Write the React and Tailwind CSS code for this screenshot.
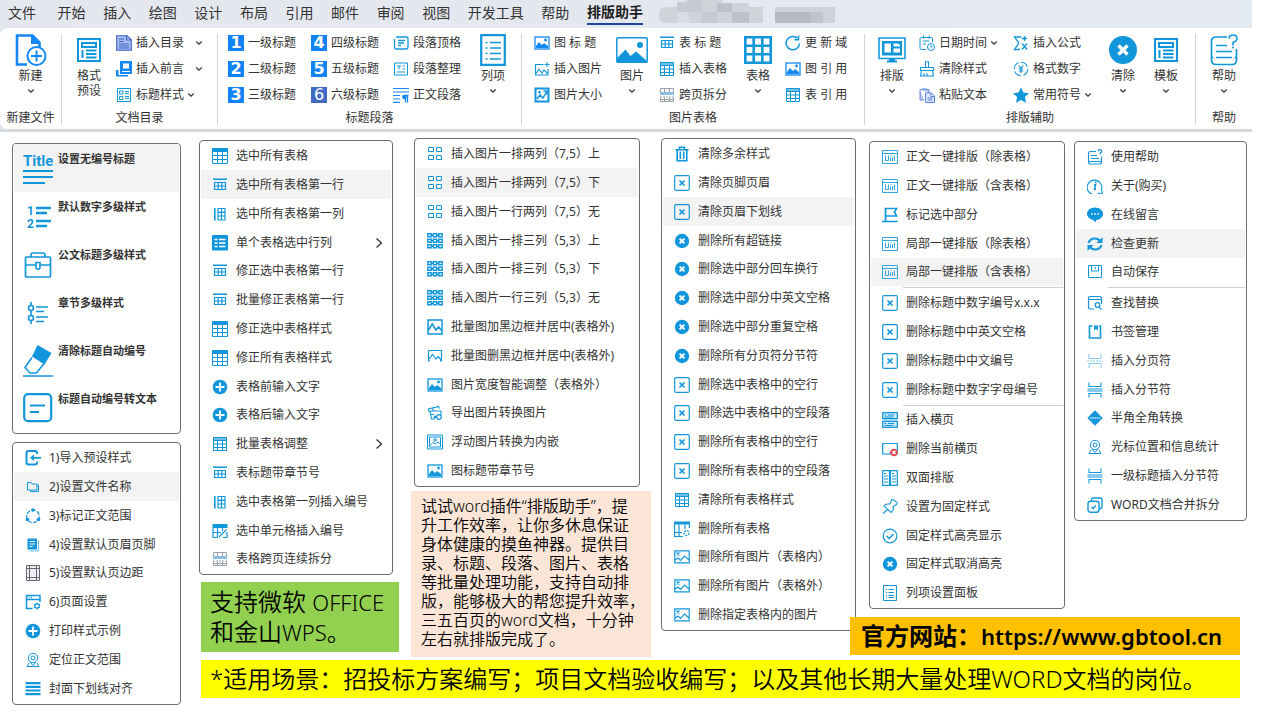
import React from 'react';

const B = '#1296db';
const V = '#1488f5';

function Pic({ x = 1, y = 2, w = 14, h = 12 }) {
  return (
    <>
      <rect x={x} y={y} width={w} height={h} fill="none" stroke="currentColor" strokeWidth="1.3" />
      <path d="M2 13V11l3-4 3 3 2-2 4 3v2z" fill="currentColor" />
      <circle cx="11.5" cy="5" r="1.4" fill="currentColor" />
    </>
  );
}

function Cross({ x = 8, y = 8, r = 2.5, w = 1.7, c = 'currentColor' }) {
  return (
    <path
      d={`M${x - r} ${y - r}L${x + r} ${y + r}M${x + r} ${y - r}L${x - r} ${y + r}`}
      stroke={c}
      strokeWidth={w}
      fill="none"
    />
  );
}

const line = { fill: 'none', stroke: 'currentColor', strokeWidth: 1.2 };
const solid = { fill: 'currentColor' };

const ICONS = {
  table: (
    <>
      <path {...solid} d="M0 0h16v4H0z" />
      <path {...line} strokeWidth="1" d="M.5 4v11.5h15V4M5.5 4v11.5M10.5 4v11.5M.5 7.5h15M.5 11.5h15" />
    </>
  ),
  tableThin: (
    <>
      <path {...solid} opacity=".6" d="M1 1h14v3.5H1z" />
      <path {...line} strokeWidth="1" d="M1.5 1.5h13v13h-13zM1.5 4.5h13M5.5 4.5v10M10.5 4.5v10M1.5 8h13M1.5 11.5h13" />
    </>
  ),
  rowTable: (
    <>
      <path {...solid} d="M1 1.500h14v1.500H1z" />
      <path {...line} d="M2.5 5.5h11v7h-11zM2.5 9h11M6.2 5.5v7M9.8 5.5v7" />
    </>
  ),
  colTable: (
    <>
      <path {...solid} d="M2 2h1.600v12.500H2z" />
      <path {...line} d="M6 2.500h7v11.500H6zM9.500 2.500V14M6 6.300h7M6 10h7" />
    </>
  ),
  listTable: (
    <>
      <rect {...solid} width="16" height="15.500" rx="1" />
      <path stroke="#fff" strokeWidth="1.500" d="M2.500 4.500h3M7 4.500h6.500M2.500 8h3M7 8h6.500M2.500 11.500h3M7 11.500h6.500" />
    </>
  ),
  editTable: (
    <>
      <path {...solid} d="M.5 1h15v4H.5z" />
      <path {...line} d="M1 5v9.500h5M15 9v5.500h-4M5.500 5v9M1 9.500h8M10.500 5v3M7 14l7.500-7.500" />
    </>
  ),
  splitTable: (
    <>
      <path fill="none" stroke="#9aa0a8" d="M1.500 5.500v-4h13v4M1.500 10.500v4h13v-4M5.500 1.500v4M10.500 1.500v4M5.500 10.500v4M10.500 10.500v4M1.500 12.500h13" />
      <path fill="#8dbfe2" d="M1 5h14v3H1z" />
      <path stroke="#9aa0a8" strokeDasharray="2 1" d="M1 10h14" />
    </>
  ),
  plus: (
    <>
      <circle {...solid} cx="8" cy="8" r="7.300" />
      <path stroke="#fff" strokeWidth="1.800" d="M8 3.500v9M3.500 8h9" />
    </>
  ),
  grid4: <path {...line} strokeWidth="1" d="M1.500 1.500h5v4h-5zM9.500 1.500h5v4h-5zM1.500 9.500h5v4h-5zM9.500 9.500h5v4h-5z" />,
  grid9: (
    <path
      {...line}
      strokeWidth="1.400"
      d="M.8 .8h3.400v3H.8zM6.300 .8h3.400v3H6.300zM11.800 .8h3.400v3h-3.400zM.8 6.300h3.400v3H.8zM6.300 6.300h3.400v3H6.300zM11.800 6.300h3.400v3h-3.400zM.8 11.800h3.400v3H.8zM6.300 11.800h3.400v3H6.300zM11.800 11.800h3.400v3h-3.400zM4.200 2.300h2.100M9.700 2.300h2.100M4.200 7.800h2.100M9.700 7.800h2.100M4.200 13.300h2.100M9.700 13.300h2.100"
    />
  ),
  frame: <path {...line} strokeWidth="1.500" d="M1 1h14v14H1zM1.500 11l3.800-6 3.700 6 2.500-3 3.300 3.500" />,
  frameOpen: <path {...line} strokeWidth="1.200" d="M1.500 2.500h13V13H13M1.500 2.500V13H3M1.500 12l4-5.500L9 11l2-2.500 3.500 4" />,
  pic: <Pic />,
  export: (
    <>
      <path {...line} strokeWidth="1.100" d="M2 7 1.500 4l10-2.500 1 2M3 6h11v4M3 6l1.500 8H8M4 9.500h3M6 3v3" />
      <circle {...line} cx="12" cy="12" r="2.300" />
      <path {...solid} d="M6 13l2-3 2 3z" />
    </>
  ),
  embed: (
    <>
      <path {...line} strokeWidth="1" d="M.5 1h15v14H.5zM2.500 3h11v10h-11zM3 11.500l3-3 2.500 1.500L11 8l2.500 2" />
      <circle {...line} strokeWidth="1" cx="8" cy="6" r="1.300" />
    </>
  ),
  trash: (
    <path {...line} strokeWidth="1.600" d="M1.500 3.800h13M5.500 3.500V1.200h5v2.300M3.200 4v10.800h9.600V4M6.300 5.500v7.500M9.700 5.500v7.500" />
  ),
  boxX: (
    <>
      <rect {...line} x=".7" y=".7" width="14.600" height="14.600" rx="1.200" />
      <Cross />
    </>
  ),
  circleX: (
    <>
      <circle {...solid} cx="8" cy="8" r="7.200" />
      <Cross c="#fff" r={2.4} w={2} />
    </>
  ),
  delTable: (
    <>
      <path {...solid} d="M0 .5h16v3H0z" />
      <path {...line} d="M.6 3.500v12H9M5 3.500v12M15.400 3.500V7M.6 11.500H8M11 3.500V8" />
      <circle {...line} strokeDasharray="2 1" cx="12.500" cy="12" r="2.500" />
    </>
  ),
  delPic: (
    <>
      <path {...line} d="M.8 1.800h14.400v12H.8zM1 11l3-2 2.500 2.500L10.500 7l4.500 4" />
      <Cross x={4} y={5} r={1.5} w={1.2} />
    </>
  ),
  layout: (
    <path
      {...line}
      strokeWidth="1"
      opacity=".85"
      d="M.5 1.500h15v13H.5zM.5 4.500h15M3.500 6.500v5h3v-5M8.500 6.500h1M8.500 8.500v3.500M10.500 8v4M12.500 6.500V12"
    />
  ),
  flag: <path {...line} strokeWidth="1.700" d="M3.500 14V1.500h11l-2 3.700 2 3.800h-11M0 14.500h15.500" />,
  insPage: (
    <>
      <path fill="currentColor" opacity=".22" d="M1 1h14v14H1z" />
      <path {...line} d="M.7 .7h14.600v6H.7zM.7 9.300h14.600v6H.7zM2.500 3h2M6 3h6M2.500 5h9M2.500 11.500h2M6 11.500h6M2.500 13.500h9" />
    </>
  ),
  delPage: (
    <>
      <path {...line} d="M.7 2.500h14.600V13H.7z" />
      <path fill="#27508c" d="M7 12.500l3.500-4v4z" />
      <circle cx="12" cy="11.500" r="3.700" fill="#e64b55" />
      <Cross x={12} y={11.5} r={1.5} w={1.2} c="#fff" />
    </>
  ),
  pages: <path {...line} d="M.7 .7h6.800v14.600H.7zM8.500 .7h6.800v14.600H8.500zM2 3.500h2M2 6h4M2 9h4M2 12h4M10 3.500h2M10 6h4M10 9h4M10 12h4" />,
  pin: <path {...line} strokeWidth="1.100" d="M9.500 1q1-.7 2 0l3.500 2.500q.5 1-.3 1.700L11 7.500l.5 3L9 13.500 2 7q1.500-2 3.500-2H8zM5.500 10.500l-4.500 4" />,
  check: (
    <>
      <circle {...line} cx="8" cy="8" r="6.800" />
      <path {...line} strokeWidth="1.500" d="M4.700 8l2.500 2.500L11.500 6" />
    </>
  ),
  list: <path {...line} strokeWidth="1" d="M1.500 .5h13v15h-13zM4 4.500h1M6.500 4.500H12M4 7.500h1M6.500 7.500H12M4 10.500h1M6.500 10.500H12M4 12.500h1M6.500 12.500H12" />,
  help: (
    <>
      <path {...line} strokeWidth="1.100" d="M9 2.500H3.500Q1.500 2.500 1.500 4.500v8.500q0 2 2 2h9q2 0 2-2V7.500M4 6.500h6M4 9.500h8M1 12.500h14" />
      <path {...line} d="M11 2.200q.3-1.500 2-1.500t1.800 1.500q0 1.200-1.600 1.800v1.500" />
    </>
  ),
  info: (
    <>
      <path {...line} strokeWidth="1.100" d="M15.500 15.200h-3.500A7.300 7.300 0 1 1 14.500 11.500z" />
      <path {...line} strokeWidth="1.500" d="M7 6.800h1.500L7.700 11.200H9" />
      <circle {...solid} cx="8.700" cy="4.500" r="1" />
    </>
  ),
  chat: (
    <>
      <path {...solid} d="M8 .5c4.500 0 8 2.800 8 6.300 0 3.300-2.800 5.700-6.500 6.200L8 15.500 6.500 13C2.800 12.500 0 10 0 6.800 0 3.300 3.500 .5 8 .5z" />
      <path stroke="#fff" strokeWidth="1.500" d="M4 7h1.500M7.200 7h1.500M10.500 7H12" />
    </>
  ),
  sync: (
    <>
      <path {...line} strokeWidth="2.200" d="M1.500 7Q3 2.500 8 2.500q3 0 4.500 2M14.500 9Q13 13.500 8 13.500q-3 0-4.500-2" />
      <path {...solid} d="M15.500 1v6h-6zM.5 15V9h6z" />
    </>
  ),
  save: <path {...line} strokeWidth="1" d="M1.500 1.500h13v12h-13zM4.500 1.500V7h7V1.500M8.500 3v2" />,
  search: (
    <>
      <path {...line} d="M7 14H3.500q-2 0-2-2V3.500q0-2 2-2h9q2 0 2 2V9M1.500 4.500h13" />
      <circle {...line} cx="10.500" cy="10" r="2.300" />
      <path {...line} d="M12 12l2.500 2.500" />
    </>
  ),
  bookmark: (
    <>
      <path {...line} strokeWidth="1.600" d="M5.500 2H2.500v12h11V2H12" />
      <path {...solid} d="M7 1.500h4v5L9 5 7 6.500z" />
    </>
  ),
  breakLight: (
    <g opacity=".5">
      <path {...line} strokeWidth="1" d="M2 1v4.500h12V1M2 15v-4.500h12V15" />
      <path {...line} strokeDasharray="2 1" d="M0 8h16" />
    </g>
  ),
  breakPage: <path {...line} strokeWidth="1.100" d="M2 .5v4h12v-4M2 15.500v-4h12v4M.5 7h15M.5 9h15" />,
  diamond: (
    <>
      <path {...solid} d="M8 .3L15.700 8 8 15.700 .3 8z" />
      <path stroke="#cfeafa" strokeWidth="1.300" strokeDasharray="1.500 .7" d="M3 8h10" />
    </>
  ),
  locate: (
    <>
      <circle {...line} strokeWidth="1" cx="8" cy="6" r="4.700" />
      <circle {...line} strokeWidth="1" cx="8" cy="6" r="2" />
      <path {...line} strokeWidth="1" d="M5 10l3 3.500 3-3.500M4 11l-2 3.500h12L12 11" />
    </>
  ),
  merge: (
    <>
      <path {...line} strokeWidth="1.400" d="M4.500 4V2.500q0-1.500 1.500-1.500h7.500Q15 1 15 2.500V10q0 1.500-1.500 1.500H12" />
      <rect {...line} strokeWidth="1.400" x="1" y="4.200" width="11" height="11" rx="2.500" />
      <path {...line} strokeWidth="1.400" d="M4.500 9.700l1.700 1.700L9 8.500" />
    </>
  ),
  import: (
    <>
      <path {...line} strokeWidth="2" d="M12 4V3q0-2-2-2H3.500q-2 0-2 2v9.500q0 2 2 2H10q2 0 2-2v-1" />
      <path {...line} strokeWidth="1.800" d="M16 7.800H7" />
      <path {...solid} d="M9 4.500v6.600L5 7.800z" />
    </>
  ),
  folder: <path {...line} strokeWidth="1" d="M2.500 3.500H6l1 1.500h5v6H2.500zM12 6h1.500v6.500H5" />,
  ring: (
    <>
      <circle {...line} cx="8" cy="8.300" r="6.300" strokeDasharray="4 1.500" />
      <circle {...solid} cx="8" cy="2" r="1.800" />
      <circle {...solid} cx="2.500" cy="11.500" r="1.800" />
      <circle {...solid} cx="13.500" cy="11.500" r="1.800" />
    </>
  ),
  docs: (
    <>
      <path {...solid} d="M2.500 1.500H12v11H2.500z" />
      <path stroke="#fff" strokeWidth="1.100" d="M4.500 4.500H10M4.500 7H10M4.500 9.500h3" />
      <path {...line} strokeWidth="1" opacity=".6" d="M13.500 3.500v10.500H4.500" />
    </>
  ),
  margins: <path fill="#eeeef5" stroke="#66666f" strokeWidth="1" d="M1.500 .5h13v15h-13zM4.500 .5v15M11.500 .5v15M1.500 3.500h13M1.500 12.500h13" />,
  pageSet: (
    <>
      <path {...line} strokeWidth="1.500" d="M7.500 14.500h-6v-13h13.500V8M1.500 5.500H15M3.500 3.500h1M6 3.500h1" />
      <circle {...line} cx="12" cy="12" r="2.200" />
      <path {...line} d="M12 8.500v1.300M12 14.200v1.300M9 10.300l1 .6M14 13.100l1 .6M9 13.700l1-.6M14 10.900l1-.6" />
    </>
  ),
  bars: <path {...solid} d="M.5 1h15v2.200H.5zM.5 4.700h15v2.200H.5zM.5 8.400h15v2.200H.5zM.5 12.100h15v2.200H.5z" />,
  toc: (
    <>
      <path fill="#a9bdf0" d="M.5 .5h11l4 4v11H.5z" />
      <path fill="none" stroke="#3c63c8" strokeWidth="1.100" d="M.7 15.300V.7h10.300l4.300 4v10.600zM10.500 1v4h5M3 4h5M3 6.500h5M3 9h10M3 11h10M3 13h10" />
    </>
  ),
  preface: (
    <>
      <path {...solid} d="M4 0h12v13H4zM0 9h2.500v6.500H0zM2 14h10v1.500H2z" />
      <path fill="#fff" d="M7 2.500h6v5H7zM6 10h8v1H6z" />
    </>
  ),
  tstyle: <path {...line} strokeWidth="1" d="M1.500 1.500h13v13h-13zM3.500 4H7v3H3.500zM3.500 9.500H7v3H3.500zM9 4.500h4M9 6.500h4M9 9.500h4M9 11.500h4" />,
  para: (
    <>
      <path {...line} strokeWidth="1.300" d="M3 2h10q2 0 2 2v8q0 2-2 2H3.500q-2 0-2-2V4" />
      <path {...line} strokeWidth="1.300" d="M5 5.500h7M5 8h6M5 10.500h3" />
    </>
  ),
  paraFix: <path {...line} strokeWidth="1" d="M1.500 2h13v12h-13zM4 5h4M6 5v3.500M9.500 5H12M9.500 8H12M4 11h8" />,
  paraText: (
    <>
      <path {...line} d="M0 1.500h16M0 5h16M0 8.500h7M0 12h7M0 15.300h7" />
      <path {...line} strokeWidth="1.300" d="M15.500 8.500h-3.500M12.500 8.500v7M14.500 8.500v7" />
      <circle {...solid} cx="11.300" cy="10" r="2.200" />
    </>
  ),
  insPic: <path {...line} strokeWidth="1.100" d="M9.500 3.500h-8V14h12.500V8M2 12.500l3-4L8 12l2-3 3.500 3.500M13 1v5M10.500 3.500h5" />,
  sizePic: (
    <>
      <path {...line} strokeWidth="2" d="M1.500 1.500h13v13h-13z" />
      <path {...line} strokeWidth="1.500" d="M3 12l3-4 3 3 4-7M9.500 4H13v3.500" />
      <circle {...solid} cx="5.500" cy="5.200" r="1.300" />
    </>
  ),
  refresh: (
    <>
      <path {...line} strokeWidth="1.500" d="M14.500 8.500A6.700 6.700 0 1 1 12.500 3.300" />
      <path {...line} strokeWidth="1.500" d="M13.500 .5v4.200H9.500" />
    </>
  ),
  date: (
    <>
      <path {...line} strokeWidth="1" d="M7 14.500H2.500q-1.500 0-1.500-1.500V4q0-1.500 1.500-1.500h9.500q1.500 0 1.500 1.500v3M4.500 .5v3M10 .5v3M4 6h6M4 9h3" />
      <circle {...line} strokeWidth="1" cx="12" cy="12" r="3.500" />
      <path {...line} strokeWidth="1" d="M12 10v2h1.500" />
    </>
  ),
  brush: <path {...line} strokeWidth="1.100" d="M6.500 6V.7h3V6M1.500 9.500V6.500h13v3zM2.500 9.500l-1 5.500h13l-1-5.500M5 15v-3M8 15v-3" />,
  paste: (
    <>
      <path fill="#b8c4f0" stroke="#6e8ce0" d="M1 2.500h9V6M1 2.500V13h4" />
      <path fill="#8db5f0" d="M3.500 1h4v2.500h-4z" />
      <path fill="#dfe8fb" stroke="#5b80da" d="M6.500 6h6l3 3v6.500h-9zM12 6v3.500h3.500M8.500 11h5M8.500 13h5" />
    </>
  ),
  sigma: <path {...line} strokeWidth="1.300" d="M8.500 2H1.500l4.300 6L1.500 14.500H7M9 8.500l5 6M14 8.500l-5 6M11.500 1v5M9 3.500h5" />,
  money: (
    <>
      <circle {...line} strokeWidth="1.100" cx="8" cy="8" r="6.700" strokeDasharray="8 2.500" />
      <path {...line} strokeWidth="1.200" d="M5.800 4.500L8 7.500l2.200-3M8 7.500V12M5.800 8h4.400M5.800 10h4.400" />
    </>
  ),
  star: <path {...solid} d="M8 .3l2.400 5.200 5.600.7-4.100 3.900 1.100 5.600L8 13l-5 2.700 1.100-5.600L0 6.200l5.600-.7z" />,
};

function Icon({ name, color = B, className = 'size-4' }) {
  return (
    <svg viewBox="0 0 16 16" className={`shrink-0 ${className}`} style={{ color }} aria-hidden="true">
      {ICONS[name]}
    </svg>
  );
}

function Chevron() {
  return (
    <svg viewBox="0 0 8 6" className="h-[6px] w-2 shrink-0" aria-hidden="true">
      <path d="M1.300 1.500L4 4.200l2.700-2.700" fill="none" stroke="#333" strokeWidth="1.200" />
    </svg>
  );
}

const BIG = {
  create: (
    <svg viewBox="0 0 32 32" className="size-8" aria-hidden="true">
      <path d="M12 30.500H2V1.500h15.500l7 7V13" fill="none" stroke={V} strokeWidth="2.600" />
      <path d="M16 1v9h9z" fill={V} />
      <circle cx="21.500" cy="22" r="9" fill="#fff" stroke={V} strokeWidth="2" />
      <path d="M21.500 16.500v11M16 22h11" stroke={V} strokeWidth="2" />
    </svg>
  ),
  preset: (
    <svg viewBox="0 0 24 24" className="size-6" aria-hidden="true">
      <path d="M1 1h22v22H1zM5 5h14v4H5zM5.500 12v8M9 12.500h10.500M9 16h10.500M9 19.500h10.500" fill="none" stroke={B} strokeWidth="2" />
    </svg>
  ),
  items: (
    <svg viewBox="0 0 26 32" className="h-8 w-[26px]" aria-hidden="true">
      <path d="M1.200 1.200h23.600v29.600H1.200z" fill="none" stroke={B} strokeWidth="2.200" />
      <path d="M5.500 8.500h2M5.500 14h2M5.500 19.500h2M5.500 25h2M10 8.500h11M10 14h11M10 19.500h11M10 25h11" stroke={B} strokeWidth="1.600" />
    </svg>
  ),
  picture: (
    <svg viewBox="0 0 32 26" className="h-[26px] w-8" aria-hidden="true">
      <rect x=".8" y=".8" width="30.400" height="24.400" rx="1" fill="none" stroke={B} strokeWidth="1.500" />
      <path d="M1 25v-4l8.500-8.500 5 6.500 5.500-4.500L31 24v1z" fill={B} />
      <circle cx="24" cy="8" r="3" fill={B} />
    </svg>
  ),
  grid: (
    <svg viewBox="0 0 28 28" className="size-7" aria-hidden="true">
      <path d="M1.300 1.300h25.400v25.400H1.300zM9.700 1v26M18.300 1v26M1 9.700h26M1 18.300h26" fill="none" stroke={B} strokeWidth="2.600" />
    </svg>
  ),
  screen: (
    <svg viewBox="0 0 28 26" className="h-[26px] w-7" aria-hidden="true">
      <path d="M1 1h26v20.500H1z" fill="none" stroke={B} strokeWidth="1.600" />
      <path d="M4 4h20v14.500H4z" fill={B} />
      <path d="M6.500 6.500h6.500v9H6.500zM15.500 6.500h4.500l2 1.500v1.500h-6.500zM15.500 11.500h6.500v4h-6.500z" fill="#fff" />
      <path d="M11 22h6v1.500h2v2h-10v-2h2z" fill={B} />
    </svg>
  ),
  clear: (
    <svg viewBox="0 0 28 28" className="size-7" aria-hidden="true">
      <circle cx="14" cy="14" r="14" fill={B} />
      <path d="M9.500 9.500l9 9M18.500 9.500l-9 9" stroke="#fff" strokeWidth="3.400" />
    </svg>
  ),
  help: (
    <svg viewBox="0 0 28 32" className="h-8 w-7" aria-hidden="true">
      <path d="M17 3H6Q1.500 3 1.500 7.500V26q0 4.500 4.500 4.500h16q4.500 0 4.500-4.500V15M6 11.500h11M6 17.500h16M6 23.500h16M1.500 23.500h2M24.500 23.500h2" fill="none" stroke={B} strokeWidth="1.700" />
      <path d="M19 4.500q0-3.500 4-3.500t4 3.500q0 2.500-4 4v3" fill="none" stroke={B} strokeWidth="1.600" />
      <circle cx="23" cy="13.500" r="1" fill={B} />
    </svg>
  ),
};

function BigButton({ icon, lines, menu = true, className = '' }) {
  return (
    <button type="button" className={`flex w-9 shrink-0 flex-col items-center pt-[2px] ${className}`}>
      <span className="flex h-9 items-center justify-center">{BIG[icon]}</span>
      {lines.map((l) => (
        <span key={l} className="h-[15px] leading-4 whitespace-nowrap">
          {l}
        </span>
      ))}
      {menu && (
        <span className="flex h-4 items-center">
          <Chevron />
        </span>
      )}
    </button>
  );
}

function NumTile({ n, alt }) {
  return (
    <span
      className={`flex size-4 shrink-0 items-center justify-center font-['DejaVu_Sans',sans-serif] text-[16px] leading-4 text-white ${
        alt ? 'bg-[#4169c4]' : 'bg-[#1283f5] font-bold'
      }`}
    >
      {n}
    </span>
  );
}

function SmallColumn({ items, className = '' }) {
  return (
    <div className={`flex shrink-0 flex-col ${className}`}>
      {items.map(({ icon, num, alt, color, text, chev }) => (
        <button type="button" key={text} className="flex h-[26px] items-center gap-1 whitespace-nowrap">
          {num ? <NumTile n={num} alt={alt} /> : <Icon name={icon} color={color} />}
          <span className="min-w-12 text-left leading-4">{text}</span>
          {chev && (
            <span className={`flex ${chev === 'far' ? 'ml-[7px]' : '-ml-px'}`}>
              <Chevron />
            </span>
          )}
        </button>
      ))}
    </div>
  );
}

function Group({ label, className, bodyClass = '', children }) {
  return (
    <section aria-label={label} className={`flex min-w-0 flex-col ${className}`}>
      <div className={`flex h-[78px] ${bodyClass}`}>{children}</div>
      <div className="text-center leading-5 whitespace-nowrap">{label}</div>
    </section>
  );
}

const Divider = () => <div className="my-1 w-px shrink-0 bg-[#d4d4d6]" />;

const TABS = ['文件', '开始', '插入', '绘图', '设计', '布局', '引用', '邮件', '审阅', '视图', '开发工具', '帮助', '排版助手'];

function Tabs() {
  return (
    <nav className="flex h-7 items-start bg-gradient-to-r from-[#e5e7ee] to-[#e3eaef] pl-2">
      <div className="flex w-[635px] shrink-0 justify-between">
        {TABS.map((t, i) => (
          <button
            type="button"
            key={t}
            className={`h-[25px] shrink-0 pt-px text-[14px] leading-[22px] first:mr-1 ${
              i === TABS.length - 1 ? 'border-b-2 border-[#1d479c] font-bold text-[#1c1c1c]' : ''
            }`}
          >
            {t}
          </button>
        ))}
      </div>
      <svg viewBox="0 0 176 24" className="ml-4 h-6 w-44 shrink-0" aria-hidden="true">
        <path d="M8 7h10V2h8V0h37v3h27v4h14v16H8Q0 23 0 15T8 7z" fill="#d0d4d9" />
        <path d="M18 2h12v10H18zM30 0h13v12H30zM43 12h15v11H43z" fill="#c7cad0" />
        <path d="M58 3h15v9H58zM73 12h17v11H73z" fill="#bdc2c8" />
        <path d="M18 12h12v11H18z" fill="#d9dce0" />
        <path d="M116 7h60v16h-60z" fill="#cdd3d8" />
        <path d="M116 12h20v11h-20zM136 12h16v11h-16z" fill="#b4babf" />
        <path d="M152 12h12v11h-12z" fill="#bfc6cb" />
      </svg>
    </nav>
  );
}

function Ribbon() {
  return (
    <div className="mr-7 border-b-[3px] border-[#d5dade] bg-[#e4e8ee]">
      <Tabs />
      <div className="flex h-[101px] rounded-l-lg bg-white pt-[2px]">
        <Group label="新建文件" className="flex-[61_1_0%]" bodyClass="justify-center">
          <BigButton icon="create" lines={['新建']} />
        </Group>
        <Divider />
        <Group label="文档目录" className="flex-[155_1_0%]" bodyClass="pl-[9px]">
          <BigButton icon="preset" lines={['格式', '预设']} menu={false} />
          <SmallColumn
            className="ml-[9px]"
            items={[
              { icon: 'toc', text: '插入目录', chev: 'far' },
              { icon: 'preface', color: V, text: '插入前言', chev: 'far' },
              { icon: 'tstyle', text: '标题样式', chev: 'near' },
            ]}
          />
        </Group>
        <Divider />
        <Group label="标题段落" className="flex-[303_1_0%]" bodyClass="pl-[10px]">
          <SmallColumn
            items={[
              { num: 1, text: '一级标题' },
              { num: 2, text: '二级标题' },
              { num: 3, text: '三级标题' },
            ]}
          />
          <SmallColumn
            className="ml-[15px]"
            items={[
              { num: 4, text: '四级标题' },
              { num: 5, text: '五级标题' },
              { num: 6, alt: true, text: '六级标题' },
            ]}
          />
          <SmallColumn
            className="ml-[14px]"
            items={[
              { icon: 'para', text: '段落顶格' },
              { icon: 'paraFix', text: '段落整理' },
              { icon: 'paraText', color: V, text: '正文段落' },
            ]}
          />
          <BigButton icon="items" lines={['列项']} className="ml-[14px]" />
        </Group>
        <Divider />
        <Group label="图片表格" className="flex-[342_1_0%]" bodyClass="pl-3">
          <SmallColumn
            items={[
              { icon: 'pic', color: V, text: '图 标 题' },
              { icon: 'insPic', text: '插入图片' },
              { icon: 'sizePic', text: '图片大小' },
            ]}
          />
          <BigButton icon="picture" lines={['图片']} className="ml-3" />
          <SmallColumn
            className="ml-[9px]"
            items={[
              { icon: 'rowTable', text: '表 标 题' },
              { icon: 'tableThin', text: '插入表格' },
              { icon: 'splitTable', text: '跨页拆分' },
            ]}
          />
          <BigButton icon="grid" lines={['表格']} className="ml-[13px]" />
          <SmallColumn
            className="ml-[9px]"
            items={[
              { icon: 'refresh', text: '更 新 域' },
              { icon: 'pic', color: V, text: '图 引 用' },
              { icon: 'tableThin', text: '表 引 用' },
            ]}
          />
        </Group>
        <Divider />
        <Group label="排版辅助" className="flex-[330_1_0%]" bodyClass="pl-[9px]">
          <BigButton icon="screen" lines={['排版']} />
          <SmallColumn
            className="ml-[9px] w-[94px]"
            items={[
              { icon: 'date', text: '日期时间', chev: 'near' },
              { icon: 'brush', text: '清除样式' },
              { icon: 'paste', text: '粘贴文本' },
            ]}
          />
          <SmallColumn
            className="w-[92px]"
            items={[
              { icon: 'sigma', text: '插入公式' },
              { icon: 'money', text: '格式数字' },
              { icon: 'star', text: '常用符号', chev: 'near' },
            ]}
          />
          <BigButton icon="clear" lines={['清除']} />
          <BigButton icon="preset" lines={['模板']} className="ml-[7px]" />
        </Group>
        <Divider />
        <Group label="帮助" className="flex-[56_1_0%]" bodyClass="justify-center">
          <BigButton icon="help" lines={['帮助']} />
        </Group>
      </div>
    </div>
  );
}

function Menu({ items, active, sub = [], seps = [], className = '' }) {
  return (
    <ul className={`rounded-[4px] border border-[#6d6d6d] bg-white px-px pb-px ${className}`}>
      {items.map(([icon, text], i) => (
        <li key={i} className="group/row">
          {seps.includes(i) && <div className="mt-px ml-8 h-px bg-[#cfcfcf]" />}
          <button
            type="button"
            className={`flex h-[29px] w-full items-center gap-2 pr-2 pl-[11px] text-left whitespace-nowrap group-nth-[5n]/row:h-7 ${
              i === active ? 'bg-[#f3f3f3]' : ''
            }`}
          >
            <Icon name={icon} />
            <span className="flex-1 leading-4">{text}</span>
            {sub.includes(i) && (
              <svg viewBox="0 0 8 12" className="h-3 w-2" aria-hidden="true">
                <path d="M1.500 1.500L6.500 6l-5 4.500" fill="none" stroke="#333" strokeWidth="1.300" />
              </svg>
            )}
          </button>
        </li>
      ))}
    </ul>
  );
}

const STYLE_ICONS = {
  title: (
    <>
      <text x="0" y="14" fontSize="15" fontWeight="700" fontFamily="Roboto, sans-serif" fill={B}>
        Title
      </text>
      <path d="M0 19h30M0 25h30M0 31h22" stroke={B} strokeWidth="2" />
    </>
  ),
  numbers: (
    <>
      <text x="4" y="15" fontSize="12" fontWeight="700" fontFamily="Roboto, sans-serif" fill={B}>
        1
      </text>
      <text x="4" y="28" fontSize="12" fontWeight="700" fontFamily="Roboto, sans-serif" fill={B}>
        2
      </text>
      <path d="M13 8h15M13 13h11M13 21h15M13 26h11" stroke={B} strokeWidth="2.400" />
    </>
  ),
  briefcase: (
    <path
      d="M3.500 9h23q1 0 1 1v18q0 1-1 1h-23q-1 0-1-1V10q0-1 1-1zM8 9V7q0-2 2-2h10q2 0 2 2v2M2.500 17H12M18 17h9.500M13 14.500h4V20q-2 2.500-4 0z"
      fill="none"
      stroke={B}
      strokeWidth="1.700"
    />
  ),
  chapters: (
    <g fill="none" stroke={B} strokeWidth="1.600">
      <circle cx="8" cy="12" r="2.500" />
      <circle cx="8" cy="22" r="2.500" />
      <path d="M8 6v3.500M8 14.500v5M8 24.500V28M13 11h12M13 15.500h8M13 21h12M13 25.500h8" />
    </g>
  ),
  eraser: (
    <>
      <path d="M9 13.500L2 23.500l5 5.500h6.500l8-10" fill="#fff" stroke={B} strokeWidth="1.600" />
      <path d="M14.500 1l14 8-7 11.500-12.500-8z" fill={B} />
      <path d="M0 32h30" stroke={B} strokeWidth="1.500" />
    </>
  ),
  text: (
    <>
      <rect x="1.200" y="2.200" width="27" height="27" rx="4" fill="none" stroke={B} strokeWidth="2.200" />
      <path d="M7 13.500h15M7 20h9" stroke={B} strokeWidth="2.200" />
    </>
  ),
};

const STYLES = [
  ['title', '设置无编号标题'],
  ['numbers', '默认数字多级样式'],
  ['briefcase', '公文标题多级样式'],
  ['chapters', '章节多级样式'],
  ['eraser', '清除标题自动编号'],
  ['text', '标题自动编号转文本'],
];

function StyleMenu() {
  return (
    <ul className="rounded-[4px] border border-[#6d6d6d] bg-white px-px pb-px">
      {STYLES.map(([icon, text], i) => (
        <li key={icon}>
          <button
            type="button"
            className={`flex h-12 w-full gap-[5px] pt-2 pl-[9px] text-left text-[11px] font-bold whitespace-nowrap ${
              i === 0 ? 'bg-[#f3f3f3]' : ''
            }`}
          >
            <svg viewBox="0 0 30 34" className="h-[34px] w-[30px] shrink-0" aria-hidden="true">
              {STYLE_ICONS[icon]}
            </svg>
            <span className="leading-[14px]">{text}</span>
          </button>
        </li>
      ))}
    </ul>
  );
}

const PRESETS = [
  ['import', '1)导入预设样式'],
  ['folder', '2)设置文件名称'],
  ['ring', '3)标记正文范围'],
  ['docs', '4)设置默认页眉页脚'],
  ['margins', '5)设置默认页边距'],
  ['pageSet', '6)页面设置'],
  ['plus', '打印样式示例'],
  ['locate', '定位正文范围'],
  ['bars', '封面下划线对齐'],
];

const TABLES = [
  ['table', '选中所有表格'],
  ['rowTable', '选中所有表格第一行'],
  ['colTable', '选中所有表格第一列'],
  ['listTable', '单个表格选中行列'],
  ['rowTable', '修正选中表格第一行'],
  ['rowTable', '批量修正表格第一行'],
  ['table', '修正选中表格样式'],
  ['table', '修正所有表格样式'],
  ['plus', '表格前输入文字'],
  ['plus', '表格后输入文字'],
  ['tableThin', '批量表格调整'],
  ['rowTable', '表标题带章节号'],
  ['colTable', '选中表格第一列插入编号'],
  ['editTable', '选中单元格插入编号'],
  ['splitTable', '表格跨页连续拆分'],
];

const PICTURES = [
  ['grid4', '插入图片一排两列（7,5）上'],
  ['grid4', '插入图片一排两列（7,5）下'],
  ['grid4', '插入图片一行两列（7,5）无'],
  ['grid9', '插入图片一排三列（5,3）上'],
  ['grid9', '插入图片一排三列（5,3）下'],
  ['grid9', '插入图片一行三列（5,3）无'],
  ['frame', '批量图加黑边框并居中(表格外)'],
  ['frameOpen', '批量图删黑边框并居中(表格外)'],
  ['pic', '图片宽度智能调整（表格外）'],
  ['export', '导出图片转换图片'],
  ['embed', '浮动图片转换为内嵌'],
  ['pic', '图标题带章节号'],
];

const CLEARS = [
  ['trash', '清除多余样式'],
  ['boxX', '清除页脚页眉'],
  ['boxX', '清除页眉下划线'],
  ['circleX', '删除所有超链接'],
  ['circleX', '删除选中部分回车换行'],
  ['circleX', '删除选中部分中英文空格'],
  ['circleX', '删除选中部分重复空格'],
  ['circleX', '删除所有分页符分节符'],
  ['boxX', '删除选中表格中的空行'],
  ['boxX', '删除选中表格中的空段落'],
  ['boxX', '删除所有表格中的空行'],
  ['boxX', '删除所有表格中的空段落'],
  ['tableThin', '清除所有表格样式'],
  ['delTable', '删除所有表格'],
  ['delPic', '删除所有图片（表格内）'],
  ['delPic', '删除所有图片（表格外）'],
  ['delPic', '删除指定表格内的图片'],
];

const LAYOUTS = [
  ['layout', '正文一键排版（除表格）'],
  ['layout', '正文一键排版（含表格）'],
  ['flag', '标记选中部分'],
  ['layout', '局部一键排版（除表格）'],
  ['layout', '局部一键排版（含表格）'],
  ['boxX', '删除标题中数字编号x.x.x'],
  ['boxX', '删除标题中中英文空格'],
  ['boxX', '删除标题中中文编号'],
  ['boxX', '删除标题中数字字母编号'],
  ['insPage', '插入横页'],
  ['delPage', '删除当前横页'],
  ['pages', '双面排版'],
  ['pin', '设置为固定样式'],
  ['check', '固定样式高亮显示'],
  ['circleX', '固定样式取消高亮'],
  ['list', '列项设置面板'],
];

const HELPS = [
  ['help', '使用帮助'],
  ['info', '关于(购买)'],
  ['chat', '在线留言'],
  ['sync', '检查更新'],
  ['save', '自动保存'],
  ['search', '查找替换'],
  ['bookmark', '书签管理'],
  ['breakLight', '插入分页符'],
  ['breakPage', '插入分节符'],
  ['diamond', '半角全角转换'],
  ['locate', '光标位置和信息统计'],
  ['breakPage', '一级标题插入分节符'],
  ['merge', 'WORD文档合并拆分'],
];

export default function App() {
  return (
    <div className="bg-white font-['Noto_Sans','Noto_Sans_CJK_SC',sans-serif] text-[12px] text-[#333]">
      <Ribbon />
      <main className="flex items-start pt-[6px] pr-[33px] pb-4 pl-3">
        <div className="mt-[5px] flex min-w-0 flex-[169_1_0%] flex-col gap-2">
          <StyleMenu />
          <Menu items={PRESETS} active={1} />
        </div>
        <div className="ml-[18px] min-w-0 flex-[1048_1_0%]">
          <div className="relative flex items-start">
            <div className="mt-[2px] min-w-0 flex-[200_1_0%]">
              <Menu items={TABLES} active={1} sub={[3, 10]} className="mr-[6px]" />
              <p className="mt-[7px] ml-[2px] bg-[#92d050] py-[5px] pl-[9px] text-[24px] leading-[29px] font-[350] whitespace-nowrap text-black">
                支持微软 <span className="text-[22px]">OFFICE</span>
                <br />
                和金山<span className="text-[22px]">WPS</span>。
              </p>
            </div>
            <div className="ml-3 min-w-0 flex-[240_1_0%]">
              <Menu items={PICTURES} active={1} className="mr-[11px] ml-[3px]" />
              <p className="mt-1 bg-[#fbe5d6] pt-[6px] pb-2 pl-[10px] text-[16px] leading-[19px] font-[350] whitespace-nowrap text-black">
                试试word插件“排版助手”，提
                <br />
                升工作效率，让你多休息保证
                <br />
                身体健康的摸鱼神器。提供目
                <br />
                录、标题、段落、图片、表格
                <br />
                等批量处理功能，支持自动排
                <br />
                版，能够极大的帮您提升效率，
                <br />
                三五百页的word文档，十分钟
                <br />
                左右就排版完成了。
              </p>
            </div>
            <div className="ml-[10px] min-w-0 flex-[195_1_0%]">
              <Menu items={CLEARS} active={2} />
            </div>
            <div className="mt-[3px] ml-[13px] min-w-0 flex-[196_1_0%]">
              <Menu items={LAYOUTS} active={4} seps={[5, 9]} />
            </div>
            <div className="mt-[3px] ml-[9px] min-w-0 flex-[173_1_0%]">
              <Menu items={HELPS} active={3} seps={[5]} />
            </div>
            <p className="absolute right-[7px] bottom-[2px] w-[390px] bg-[#ffc000] pl-[11px] text-[24px] leading-[38px] font-bold whitespace-nowrap text-black">
              官方网站：
              <a href="https://www.gbtool.cn" className="text-[22px] font-semibold">
                https://www.gbtool.cn
              </a>
            </p>
          </div>
          <p className="mt-[3px] mr-[7px] ml-[2px] bg-[#ffff00] pl-[9px] text-[24px] leading-[38px] font-[350] whitespace-nowrap text-black">
            *适用场景：招投标方案编写；项目文档验收编写；以及其他长期大量处理WORD文档的岗位。
          </p>
        </div>
      </main>
    </div>
  );
}
